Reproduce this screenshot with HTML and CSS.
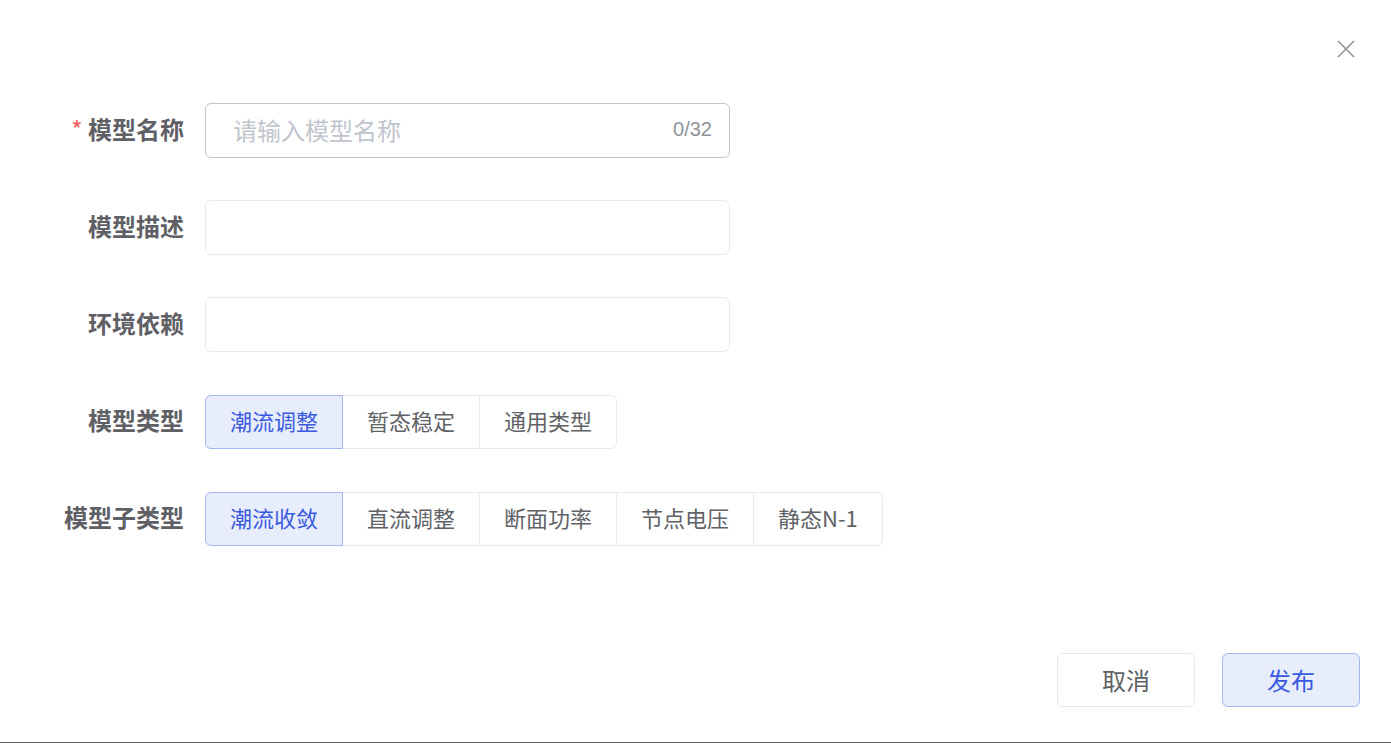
FILE: index.html
```html
<!DOCTYPE html>
<html lang="zh-CN">
<head>
  <meta charset="UTF-8" />
  <meta name="viewport" content="width=device-width, initial-scale=1.0"/>
  <title>发布模型</title>
  <link rel="stylesheet" href="styles.css">
</head>
<body>

  <div class="dialog">
    <button class="close-btn" aria-label="关闭">
      <svg width="18" height="18" viewBox="0 0 18 18">
        <path d="M1 1 L17 17 M17 1 L1 17" stroke="#909399" stroke-width="1.6" fill="none"/>
      </svg>
    </button>

    <div class="form">
      <div class="form-row">
        <label class="form-label"><span class="required">*</span>模型名称</label>
        <div class="input-box input-active">
          <span class="placeholder">请输入模型名称</span>
          <span class="counter">0/32</span>
        </div>
      </div>

      <div class="form-row">
        <label class="form-label">模型描述</label>
        <div class="input-box"></div>
      </div>

      <div class="form-row">
        <label class="form-label">环境依赖</label>
        <div class="input-box"></div>
      </div>

      <div class="form-row">
        <label class="form-label">模型类型</label>
        <div class="radio-group">
          <span class="radio-btn active">潮流调整</span>
          <span class="radio-btn">暂态稳定</span>
          <span class="radio-btn">通用类型</span>
        </div>
      </div>

      <div class="form-row">
        <label class="form-label">模型子类型</label>
        <div class="radio-group">
          <span class="radio-btn active">潮流收敛</span>
          <span class="radio-btn">直流调整</span>
          <span class="radio-btn">断面功率</span>
          <span class="radio-btn">节点电压</span>
          <span class="radio-btn">静态N-1</span>
        </div>
      </div>
    </div>

    <div class="footer">
      <button class="btn">取消</button>
      <button class="btn btn-primary">发布</button>
    </div>
  </div>

</body>
</html>
```

FILE: styles.css
```css
body {
  margin: 0;
  font-family: "Noto Sans CJK SC", "Noto Sans", sans-serif;
  background-color: #fff;
}

.dialog {
  position: relative;
  height: 743px;
  box-sizing: border-box;
  border-bottom: 1px solid #5e5e5e;
  display: flex;
  flex-direction: column;
}

.close-btn {
  position: absolute;
  top: 40px;
  right: 36px;
  padding: 0;
  border: none;
  background: none;
  width: 18px;
  height: 18px;
  cursor: pointer;
}

.close-btn svg {
  display: block;
}

.form {
  padding: 103px 0 0 40px;
  display: flex;
  flex-direction: column;
  gap: 42px;
}

.form-row {
  display: flex;
  align-items: center;
  height: 55px;
}

.form-label {
  width: 144px;
  margin-right: 21px;
  padding-bottom: 3px;
  text-align: right;
  font-size: 24px;
  font-weight: bold;
  color: #5f6066;
  line-height: 1;
}

.required {
  color: #f56c6c;
  font-size: 20px;
  margin-right: 6px;
  position: relative;
  top: -3px;
}

.input-box {
  width: 525px;
  height: 55px;
  box-sizing: border-box;
  border: 1px solid #e8eaf2;
  border-radius: 6px;
  display: flex;
  align-items: center;
  justify-content: space-between;
  padding: 0 17px 2px 27px;
}

.input-active {
  border-color: #c3c5cf;
}

.placeholder {
  font-size: 24px;
  color: #c0c4cc;
}

.counter {
  font-family: "Liberation Sans", Arial, sans-serif;
  font-size: 20px;
  color: #909399;
}

.radio-group {
  display: flex;
  height: 54px;
}

.radio-btn {
  display: flex;
  align-items: center;
  padding: 0 24px 3px;
  font-size: 22px;
  color: #606266;
  border: 1px solid #e8eaf2;
  margin-left: -1px;
  background-color: #fff;
}

.radio-btn:first-child {
  margin-left: 0;
  border-radius: 6px 0 0 6px;
}

.radio-btn:last-child {
  border-radius: 0 6px 6px 0;
}

.radio-btn.active {
  background-color: #e8edfc;
  border-color: #a5b6f3;
  color: #3a5ae0;
  position: relative;
  z-index: 1;
}

.footer {
  margin-top: auto;
  display: flex;
  justify-content: flex-end;
  gap: 27px;
  padding: 0 31px 35px 0;
}

.btn {
  width: 138px;
  height: 54px;
  padding-bottom: 3px;
  font-family: inherit;
  font-size: 24px;
  color: #606266;
  background-color: #fff;
  border: 1px solid #e6e8f0;
  border-radius: 6px;
  cursor: pointer;
}

.btn-primary {
  background-color: #e8edfc;
  border-color: #a5b6f3;
  color: #3a5ae0;
}
```
